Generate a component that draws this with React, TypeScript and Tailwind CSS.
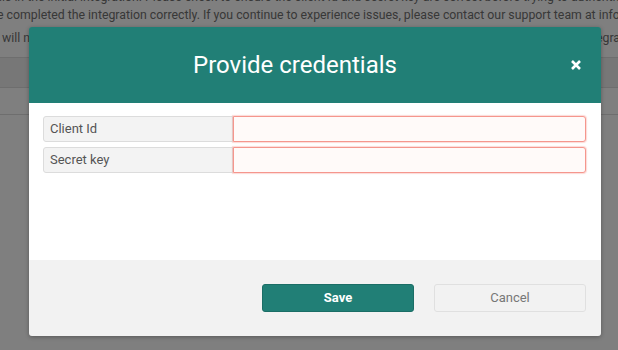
import React from "react";

export default function App() {
  return (
    <div className="relative w-[618px] h-[350px] overflow-hidden bg-white font-['Roboto','Liberation_Sans',sans-serif]">
      {/* Background page */}
      <div className="-mt-[12px] text-[12.3px] leading-[18px] text-[#707070]">
        <div className="whitespace-nowrap -ml-[1px]">
          ils in the initial integration. Please check to ensure the client Id and secret key are correct before trying to authenticate again.
        </div>
        <div className="whitespace-nowrap -ml-[3px]">
          e completed the integration correctly. If you continue to experience issues, please contact our support team at info@example.com.
        </div>
        <div className="mt-[5px] flex justify-between whitespace-nowrap overflow-hidden">
          <span className="ml-[2px]">will not be able to use this feature until you finish the</span>
          <span className="-mr-[2px]">the integra</span>
        </div>
      </div>
      <div className="mt-[10px] h-[31px] bg-[#eee] border-y border-[#ddd]" />
      <div className="h-[27px] border-b border-[#ddd]" />

      {/* Overlay */}
      <div className="absolute inset-0 bg-black/50" />

      {/* Modal */}
      <div className="absolute left-[29px] top-[27px] w-[572px] rounded-[3px] overflow-hidden shadow-[0_1px_4px_rgba(0,0,0,0.3)]">
        <div className="h-[76px] bg-[#217f76] flex items-center pr-[20px]">
          <div className="flex-1 mr-[10px] text-center text-white text-[24px] leading-none">
            Provide credentials
          </div>
          <svg width="10" height="10" viewBox="0 0 10 10" className="shrink-0">
            <path d="M1 1L9 9M9 1L1 9" stroke="white" strokeWidth="2.6" strokeLinecap="butt" />
          </svg>
        </div>
        <div className="h-[157px] bg-white pl-[14px] pr-[15px] pt-[13px]">
          <div className="flex h-[26px]">
            <div className="w-[190px] bg-[#f3f3f3] border border-[#dcdcdc] rounded-l-[3px] pl-[6px] flex items-center text-[13px] text-[#555]">
              Client Id
            </div>
            <div className="flex-1 bg-[#fffaf9] border border-[#f5968d] rounded-r-[3px] shadow-[0_0_1px_1px_rgba(245,150,140,0.35)]" />
          </div>
          <div className="flex h-[26px] mt-[5px]">
            <div className="w-[190px] bg-[#f3f3f3] border border-[#dcdcdc] rounded-l-[3px] pl-[6px] flex items-center text-[13px] text-[#555]">
              Secret key
            </div>
            <div className="flex-1 bg-[#fffaf9] border border-[#f5968d] rounded-r-[3px] shadow-[0_0_1px_1px_rgba(245,150,140,0.35)]" />
          </div>
        </div>
        <div className="h-[76px] bg-[#f2f2f2] flex justify-end items-start pt-[24px] pr-[15px] gap-[20px]">
          <button className="w-[152px] h-[28px] rounded-[3px] bg-[#217f76] border border-[#1b6e66] text-white text-[13px] font-bold flex items-center justify-center">
            Save
          </button>
          <button className="w-[152px] h-[28px] rounded-[3px] bg-[#f2f2f2] border border-[#e0e0e0] text-[#777] text-[13px] flex items-center justify-center">
            Cancel
          </button>
        </div>
      </div>
    </div>
  );
}
